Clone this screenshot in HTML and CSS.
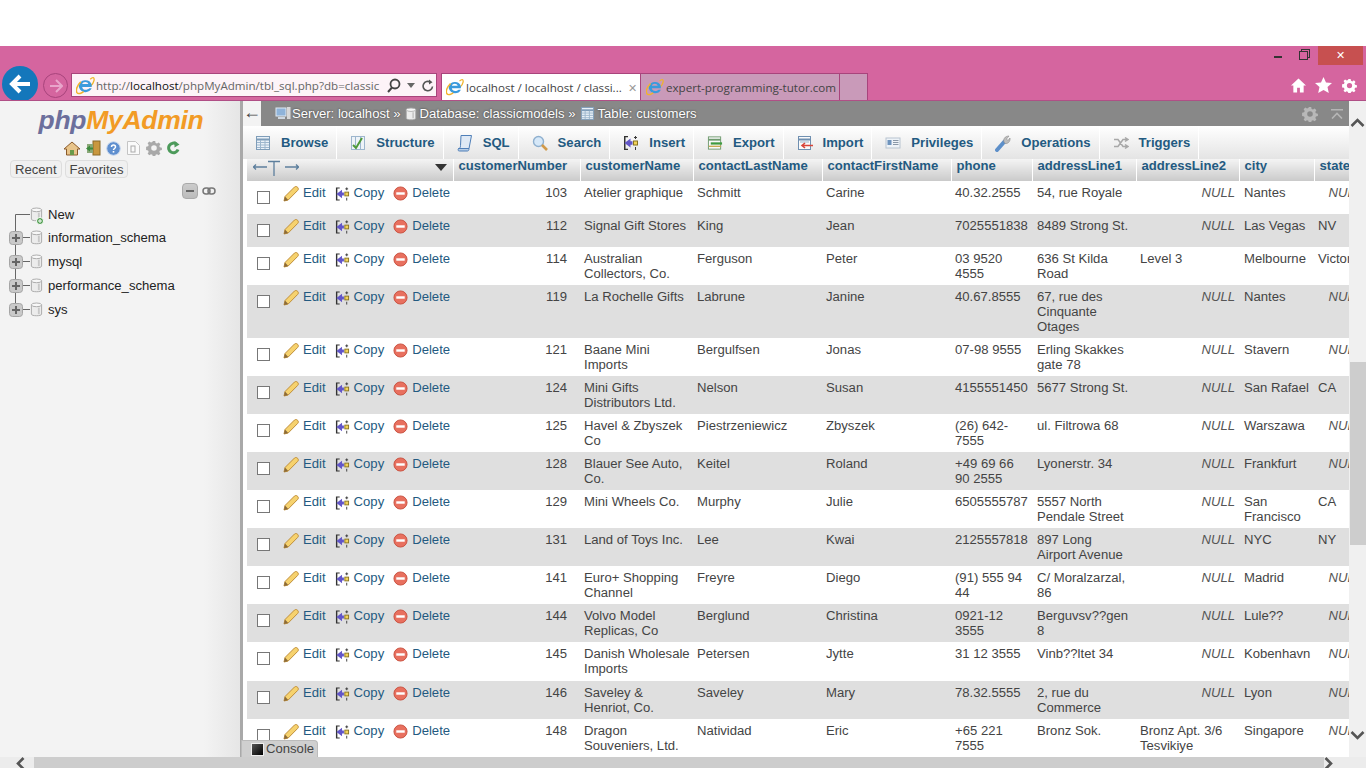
FILE: index.html
```html
<!DOCTYPE html>
<html lang="en">
<head>
<meta charset="utf-8">
<title>localhost / localhost / classicmodels / customers</title>
<link rel="stylesheet" href="styles.css">
</head>
<body>
<svg class="defs" width="0" height="0" aria-hidden="true">
  <symbol id="ie" viewBox="0 0 20 20">
    <path d="M15 3.500C17.500 1 19.500 1 19 4.500c-.4 2.200-2 4.500-4 6.500" fill="none" stroke="#f0b429" stroke-width="1.400"/>
    <path d="M3 10.500a7 7 0 0 1 13.500-1.500v2.500H6.500c.4 3.500 5 4 7.500 1.500h2.500c-2 5-11 6.200-13.500-1.500zM6.500 8.500h6.500c-.4-3-6-3-6.500 0z" fill="#3b9bdc" fill-rule="evenodd"/>
    <path d="M5 6C1 10-.5 15 1 17.500c1.500 2 5 .5 7-1" fill="none" stroke="#f2b32c" stroke-width="1.600"/>
  </symbol>
  <symbol id="pencil" viewBox="0 0 16 16">
    <path d="M1 15l1-4.500L11.500 1c1-.8 2.500-.5 3.300.5.800 1 .7 2.200-.2 3L5.200 14z" fill="#f6d26e" stroke="#c08f3a"/>
    <path d="M1 15l1-4.500 3.200 3.500z" fill="#8a6a3a"/>
  </symbol>
  <symbol id="copy" viewBox="0 0 16 16">
    <path d="M1 1h4v1.200H2.500v11.600H5V15H1z" fill="#333"/>
    <path d="M1.500 8L7.500 3.500v2.800h2v3.400h-2v2.800z" fill="#6256c8"/>
    <rect x="10.500" y="6" width="4" height="4" fill="#f2d35a" stroke="#8a7420"/>
    <path d="M12.500 1v3M11 2.500h3M12.500 12v3" stroke="#3a3a3a"/>
  </symbol>
  <symbol id="del" viewBox="0 0 16 16">
    <circle cx="8" cy="8" r="7" fill="#e8705f" stroke="#c9503f"/>
    <rect x="3.500" y="6.700" width="9" height="2.600" fill="#fff"/>
  </symbol>
  <symbol id="table" viewBox="0 0 16 16">
    <rect x="1.500" y="1.500" width="13" height="13" fill="#eaf1f8" stroke="#7f9db9"/>
    <path d="M1.500 4.500h13" stroke="#7f9db9" stroke-width="2"/>
    <path d="M2 7.500h12M2 10h12M2 12.500h12M5.500 5v9M10 5v9" stroke="#9db6cd"/>
  </symbol>
  <symbol id="db" viewBox="0 0 14 16">
    <path d="M1.500 3v10c0 2.300 11 2.300 11 0V3z" fill="#ececec" stroke="#a8a8a8"/>
    <ellipse cx="7" cy="3" rx="5.500" ry="2" fill="#f8f8f8" stroke="#a8a8a8"/>
    <path d="M9.500 6v7" stroke="#c8c8c8" stroke-width="2"/>
  </symbol>
  <symbol id="gear" viewBox="0 0 16 16">
    <path fill-rule="evenodd" d="M6.800 1h2.400l.4 2 1.400.6 1.700-1.100 1.700 1.700-1.100 1.700.6 1.400 2 .4v2.400l-2 .4-.6 1.400 1.100 1.700-1.700 1.700-1.700-1.100-1.400.6-.4 2H6.800l-.4-2-1.400-.6-1.700 1.100-1.700-1.700 1.100-1.700-.6-1.400-2-.4V6.700l2-.4.6-1.400-1.100-1.700 1.700-1.700 1.700 1.100 1.400-.6zM8 5.200a2.800 2.800 0 1 0 0 5.600 2.800 2.800 0 0 0 0-5.600z" fill="currentColor"/>
  </symbol>
  <symbol id="plus" viewBox="0 0 14 14">
    <rect x=".5" y=".5" width="13" height="13" rx="3" fill="#c9c9c9" stroke="#a5a5a5"/>
    <path d="M3 7h8M7 3v8" stroke="#666" stroke-width="2"/>
  </symbol>
</svg>

<header class="chrome">
  <div class="winbar">
    <span class="win-min"></span>
    <span class="win-restore"></span>
    <span class="win-close">✕</span>
  </div>
  <div class="toolbar">
    <span class="back"><svg width="22" height="20" viewBox="0 0 22 20"><path d="M11 2L3 10l8 8M3 10h18" fill="none" stroke="#fff" stroke-width="4"/></svg></span>
    <span class="forward"><svg width="14" height="14" viewBox="0 0 14 14"><path d="M7 1l6 6-6 6M13 7H1" fill="none" stroke="#e9a5cb" stroke-width="2"/></svg></span>
    <div class="address">
      <svg class="ie-icon" width="19" height="19"><use href="#ie"/></svg>
      <span class="url">http://<b>localhost</b>/phpMyAdmin/tbl_sql.php?db=classic</span>
      <svg class="addr-ico" width="14" height="15" viewBox="0 0 14 15"><circle cx="8" cy="6" r="4.500" fill="none" stroke="#444" stroke-width="1.800"/><path d="M5 9.500L1 14" stroke="#444" stroke-width="2"/></svg>
      <svg class="addr-caret" width="8" height="5" viewBox="0 0 8 5"><path d="M0 0h8L4 5z" fill="#666"/></svg>
      <svg class="addr-ico2" width="12" height="13" viewBox="0 0 12 13"><path d="M10.500 7.500A4.700 4.700 0 1 1 8.500 3.200" fill="none" stroke="#555" stroke-width="1.600"/><path d="M7 .5l3.500 2.800L7 5.500z" fill="#555"/></svg>
    </div>
    <div class="tab-active">
      <svg width="18" height="18"><use href="#ie"/></svg>
      <span class="tab-title">localhost / localhost / classi...</span>
      <span class="tab-x">✕</span>
    </div>
    <div class="tab-idle">
      <svg width="18" height="18"><use href="#ie"/></svg>
      <span class="tab-title">expert-programming-tutor.com</span>
    </div>
    <div class="tab-new"></div>
    <div class="tools">
      <svg width="15" height="15" viewBox="0 0 16 15"><path d="M8 0L0 7.500h2.500V15h4v-5h3v5h4V7.500H16z" fill="#fff"/></svg>
      <svg width="17" height="16" viewBox="0 0 17 16"><path d="M8.500 0l2.500 5.500 6 .6-4.500 4 1.300 5.900-5.300-3-5.300 3L4.500 10.100 0 6.100l6-.6z" fill="#fff"/></svg>
      <svg class="tool-gear" width="15" height="15"><use href="#gear"/></svg>
    </div>
  </div>
</header>

<div class="workspace">
  <aside class="sidebar">
    <div class="logo"><span class="logo-php">php</span><span class="logo-my">MyAdmin</span></div>
    <div class="nav-icons">
      <svg width="16" height="15" viewBox="0 0 16 15"><path d="M8 1L0 8h2.500v6h11V8H16z" fill="#e8c48a" stroke="#8a5a2a"/><rect x="6" y="9" width="4" height="5" fill="#6a9a4a"/></svg>
      <svg width="16" height="16" viewBox="0 0 16 16"><rect x="8" y="1" width="7" height="14" fill="#c9973f" stroke="#8a6a2a"/><rect x="2" y="4" width="6" height="9" fill="#8aa878"/><path d="M1 8.500l4-3v2h3v2H5v2z" fill="#3d8a3d"/></svg>
      <svg width="15" height="15" viewBox="0 0 15 15"><circle cx="7.500" cy="7.500" r="6.800" fill="#5f8fcf" stroke="#c7d7ee"/><path d="M5.500 6c0-2.600 4-2.600 4 0 0 1.500-2 1.500-2 3" fill="none" stroke="#fff" stroke-width="1.500"/><rect x="6.700" y="10" width="1.600" height="1.600" fill="#fff"/></svg>
      <svg width="15" height="16" viewBox="0 0 15 16"><path d="M1.500 1.500h8l4 4v9h-12z" fill="#fafafa" stroke="#c4c4c4"/><rect x="5" y="6" width="4" height="6" fill="none" stroke="#aaa"/></svg>
      <svg class="nav-gear" width="16" height="16"><use href="#gear"/></svg>
      <svg width="13" height="14" viewBox="0 0 13 14"><path d="M11 8.500A4.800 4.800 0 1 1 9.500 3.200" fill="none" stroke="#4c9a5a" stroke-width="3"/><path d="M7.500 0l5 3.500-5 3z" fill="#4c9a5a"/></svg>
    </div>
    <div class="recent-row">
      <span class="pill">Recent</span>
      <span class="pill">Favorites</span>
    </div>
    <div class="collapse-row">
      <span class="collapse-btn"></span>
      <svg width="14" height="8" viewBox="0 0 14 8"><rect x="1" y="1" width="7" height="6" rx="3" fill="none" stroke="#777" stroke-width="1.500"/><rect x="6" y="1" width="7" height="6" rx="3" fill="none" stroke="#777" stroke-width="1.500"/></svg>
    </div>
    <ul class="tree">
      <li class="tree-row">
        <svg class="tree-svg" width="44" height="24" viewBox="0 0 44 24"><path d="M15.500 24V12.500H30" fill="none" stroke="#666"/><use href="#db" x="30" y="5" width="13" height="15"/><circle cx="40" cy="19" r="3.500" fill="#4a9a4a" stroke="#fff"/><path d="M38 19h4M40 17v4" stroke="#fff"/></svg>
        <span>New</span>
      </li>
      <li class="tree-row">
        <svg class="tree-svg" width="44" height="24" viewBox="0 0 44 24"><path d="M15.500 0v24M15.500 12.500H30" fill="none" stroke="#666"/><use href="#plus" x="9" y="6" width="14" height="14"/><use href="#db" x="30" y="5" width="13" height="15"/></svg>
        <span>information_schema</span>
      </li>
      <li class="tree-row">
        <svg class="tree-svg" width="44" height="24" viewBox="0 0 44 24"><path d="M15.500 0v24M15.500 12.500H30" fill="none" stroke="#666"/><use href="#plus" x="9" y="6" width="14" height="14"/><use href="#db" x="30" y="5" width="13" height="15"/></svg>
        <span>mysql</span>
      </li>
      <li class="tree-row">
        <svg class="tree-svg" width="44" height="24" viewBox="0 0 44 24"><path d="M15.500 0v24M15.500 12.500H30" fill="none" stroke="#666"/><use href="#plus" x="9" y="6" width="14" height="14"/><use href="#db" x="30" y="5" width="13" height="15"/></svg>
        <span>performance_schema</span>
      </li>
      <li class="tree-row">
        <svg class="tree-svg" width="44" height="24" viewBox="0 0 44 24"><path d="M15.500 0v12.500H30" fill="none" stroke="#666"/><use href="#plus" x="9" y="6" width="14" height="14"/><use href="#db" x="30" y="5" width="13" height="15"/></svg>
        <span>sys</span>
      </li>
    </ul>
  </aside>

  <main class="main">
    <div class="crumbs">
      <span class="crumb-back">←</span>
      <svg class="crumb-ico first-ico" width="16" height="15" viewBox="0 0 16 15"><rect x="1" y="2" width="10" height="8" fill="#8fb3d9" stroke="#dfe9f3"/><rect x="3" y="11" width="7" height="2" fill="#cfd8e2"/><rect x="12" y="1" width="3.500" height="12" fill="#d8d8d8"/></svg>
      <span class="crumb">Server: localhost »</span>
      <svg class="crumb-ico" width="12" height="14"><use href="#db"/></svg>
      <span class="crumb">Database: classicmodels »</span>
      <svg class="crumb-ico" width="15" height="15"><use href="#table"/></svg>
      <span class="crumb">Table: customers</span>
      <span class="crumb-right">
        <svg class="crumb-gear" width="16" height="16"><use href="#gear"/></svg>
        <svg width="12" height="10" viewBox="0 0 12 10"><path d="M0 .8h12M1 9.500L6 4.500l5 5" fill="none" stroke="#b5b5b5" stroke-width="1.600"/></svg>
      </span>
    </div>

    <nav class="tabs">
      <a class="tab"><svg width="16" height="16"><use href="#table"/></svg>Browse</a>
      <a class="tab"><svg width="16" height="16" viewBox="0 0 16 16"><rect x="1.500" y="1.500" width="13" height="13" fill="#eef3f8" stroke="#9db6cd"/><path d="M5.500 2v12M10.500 2v12" stroke="#9db6cd"/><path d="M3 10l3 3 6-10" fill="none" stroke="#4e9a3a" stroke-width="2"/></svg>Structure</a>
      <a class="tab"><svg width="16" height="18" viewBox="0 0 16 18"><path d="M4 1.500h10.500l-2.500 13H1.500c1.500 0 2-1 2-3z" fill="#dfe9f5" stroke="#4f7fb8"/><path d="M1.500 14.500c-1 2 0 2.500 1 2.500h8c1 0 1.500-1 1.500-2.500z" fill="#b7cde6" stroke="#4f7fb8"/></svg>SQL</a>
      <a class="tab"><svg width="16" height="16" viewBox="0 0 16 16"><circle cx="6.500" cy="6.500" r="5" fill="#d6e8f8" stroke="#8fb0cf" stroke-width="1.400"/><path d="M10 10l5 5" stroke="#d19a4a" stroke-width="2.600"/></svg>Search</a>
      <a class="tab"><svg width="16" height="16"><use href="#copy"/></svg>Insert</a>
      <a class="tab"><svg width="16" height="16" viewBox="0 0 17 16"><rect x="1.500" y="1.500" width="13" height="13" fill="#fafafa" stroke="#6f9a6f"/><path d="M1.500 4.500h13" stroke="#6f9a6f" stroke-width="2"/><path d="M4 8.500h12" stroke="#3f9a3f" stroke-width="2.400"/><path d="M2 11.500h13" stroke="#c8a64a" stroke-width="1.400"/></svg>Export</a>
      <a class="tab"><svg width="16" height="16" viewBox="0 0 16 16"><rect x="1.500" y="1.500" width="12" height="13" fill="#fafafa" stroke="#6f8fb0"/><path d="M1.500 4.500h12" stroke="#6f8fb0" stroke-width="2"/><path d="M3 7h9" stroke="#9db6cd"/><path d="M5 10.500h11M8 8l-3 2.500L8 13" fill="none" stroke="#d8453a" stroke-width="1.600"/></svg>Import</a>
      <a class="tab"><svg width="16" height="16" viewBox="0 0 16 16"><rect x="1" y="3" width="14" height="10" fill="#eef3f8" stroke="#b8c4d0"/><rect x="2.500" y="5" width="4" height="5" fill="#6f94bd"/><path d="M8 5.500h5.500M8 7.500h5.500M8 9.500h5.500" stroke="#8a98a8"/></svg>Privileges</a>
      <a class="tab"><svg width="16" height="18" viewBox="0 0 16 18"><path d="M2 16l7.500-8.500" stroke="#5d8fc9" stroke-width="4" stroke-linecap="round"/><path d="M9 8c-1-3 1-6 5-6l-2.500 3 1.500 1.500L15 4c.5 4-2.500 6-5 5.500z" fill="#bdbdbd" stroke="#8a8a8a" stroke-width=".6"/></svg>Operations</a>
      <a class="tab"><svg width="16" height="16" viewBox="0 0 16 16"><path d="M1 4.500h4l5 7h4M1 11.500h4l5-7h4M12 2.500l3 2-3 2M12 9.500l3 2-3 2" fill="none" stroke="#a8a8a8" stroke-width="1.500"/></svg>Triggers</a>
    </nav>

    <div class="results">
      <table class="grid">
        <colgroup>
          <col class="c-cb"><col class="c-act"><col class="c-num"><col class="c-name"><col class="c-last"><col class="c-first"><col class="c-phone"><col class="c-a1"><col class="c-a2"><col class="c-city"><col class="c-state">
        </colgroup>
        <thead>
          <tr>
            <th colspan="2" class="th-tools">
              <div class="th-inner">
                <svg width="46" height="20" viewBox="0 0 46 20"><path d="M0 8h14M3 5.500L.5 8 3 10.500M32 8h14M43 5.500L45.500 8 43 10.500M15 2.500h12M21 2.500V17" fill="none" stroke="#5d7f9d" stroke-width="1.300"/></svg>
                <svg class="sort-tri" width="12" height="7" viewBox="0 0 12 7"><path d="M0 0h12L6 7z" fill="#333"/></svg>
              </div>
            </th>
            <th>customerNumber</th><th>customerName</th><th>contactLastName</th><th>contactFirstName</th><th>phone</th><th>addressLine1</th><th>addressLine2</th><th>city</th><th>state</th>
          </tr>
        </thead>
        <tbody>
          <tr><td class="cb"><input type="checkbox" aria-label="Select row"></td><td><div class="acts"><a><svg width="16" height="16"><use href="#pencil"/></svg>Edit</a><a><svg width="15" height="16"><use href="#copy"/></svg>Copy</a><a><svg width="15" height="15"><use href="#del"/></svg>Delete</a></div></td><td class="num">103</td><td>Atelier graphique</td><td>Schmitt</td><td>Carine</td><td>40.32.2555</td><td>54, rue Royale</td><td class="null">NULL</td><td>Nantes</td><td class="null">NULL</td></tr>
          <tr><td class="cb"><input type="checkbox" aria-label="Select row"></td><td><div class="acts"><a><svg width="16" height="16"><use href="#pencil"/></svg>Edit</a><a><svg width="15" height="16"><use href="#copy"/></svg>Copy</a><a><svg width="15" height="15"><use href="#del"/></svg>Delete</a></div></td><td class="num">112</td><td>Signal Gift Stores</td><td>King</td><td>Jean</td><td>7025551838</td><td>8489 Strong St.</td><td class="null">NULL</td><td>Las Vegas</td><td>NV</td></tr>
          <tr><td class="cb"><input type="checkbox" aria-label="Select row"></td><td><div class="acts"><a><svg width="16" height="16"><use href="#pencil"/></svg>Edit</a><a><svg width="15" height="16"><use href="#copy"/></svg>Copy</a><a><svg width="15" height="15"><use href="#del"/></svg>Delete</a></div></td><td class="num">114</td><td>Australian Collectors, Co.</td><td>Ferguson</td><td>Peter</td><td>03 9520 4555</td><td>636 St Kilda Road</td><td>Level 3</td><td>Melbourne</td><td>Victoria</td></tr>
          <tr><td class="cb"><input type="checkbox" aria-label="Select row"></td><td><div class="acts"><a><svg width="16" height="16"><use href="#pencil"/></svg>Edit</a><a><svg width="15" height="16"><use href="#copy"/></svg>Copy</a><a><svg width="15" height="15"><use href="#del"/></svg>Delete</a></div></td><td class="num">119</td><td>La Rochelle Gifts</td><td>Labrune</td><td>Janine</td><td>40.67.8555</td><td>67, rue des Cinquante Otages</td><td class="null">NULL</td><td>Nantes</td><td class="null">NULL</td></tr>
          <tr><td class="cb"><input type="checkbox" aria-label="Select row"></td><td><div class="acts"><a><svg width="16" height="16"><use href="#pencil"/></svg>Edit</a><a><svg width="15" height="16"><use href="#copy"/></svg>Copy</a><a><svg width="15" height="15"><use href="#del"/></svg>Delete</a></div></td><td class="num">121</td><td>Baane Mini Imports</td><td>Bergulfsen</td><td>Jonas</td><td>07-98 9555</td><td>Erling Skakkes gate 78</td><td class="null">NULL</td><td>Stavern</td><td class="null">NULL</td></tr>
          <tr><td class="cb"><input type="checkbox" aria-label="Select row"></td><td><div class="acts"><a><svg width="16" height="16"><use href="#pencil"/></svg>Edit</a><a><svg width="15" height="16"><use href="#copy"/></svg>Copy</a><a><svg width="15" height="15"><use href="#del"/></svg>Delete</a></div></td><td class="num">124</td><td>Mini Gifts Distributors Ltd.</td><td>Nelson</td><td>Susan</td><td>4155551450</td><td>5677 Strong St.</td><td class="null">NULL</td><td>San Rafael</td><td>CA</td></tr>
          <tr><td class="cb"><input type="checkbox" aria-label="Select row"></td><td><div class="acts"><a><svg width="16" height="16"><use href="#pencil"/></svg>Edit</a><a><svg width="15" height="16"><use href="#copy"/></svg>Copy</a><a><svg width="15" height="15"><use href="#del"/></svg>Delete</a></div></td><td class="num">125</td><td>Havel &amp; Zbyszek Co</td><td>Piestrzeniewicz</td><td>Zbyszek</td><td>(26) 642-7555</td><td>ul. Filtrowa 68</td><td class="null">NULL</td><td>Warszawa</td><td class="null">NULL</td></tr>
          <tr><td class="cb"><input type="checkbox" aria-label="Select row"></td><td><div class="acts"><a><svg width="16" height="16"><use href="#pencil"/></svg>Edit</a><a><svg width="15" height="16"><use href="#copy"/></svg>Copy</a><a><svg width="15" height="15"><use href="#del"/></svg>Delete</a></div></td><td class="num">128</td><td>Blauer See Auto, Co.</td><td>Keitel</td><td>Roland</td><td>+49 69 66 90 2555</td><td>Lyonerstr. 34</td><td class="null">NULL</td><td>Frankfurt</td><td class="null">NULL</td></tr>
          <tr><td class="cb"><input type="checkbox" aria-label="Select row"></td><td><div class="acts"><a><svg width="16" height="16"><use href="#pencil"/></svg>Edit</a><a><svg width="15" height="16"><use href="#copy"/></svg>Copy</a><a><svg width="15" height="15"><use href="#del"/></svg>Delete</a></div></td><td class="num">129</td><td>Mini Wheels Co.</td><td>Murphy</td><td>Julie</td><td>6505555787</td><td>5557 North Pendale Street</td><td class="null">NULL</td><td>San Francisco</td><td>CA</td></tr>
          <tr><td class="cb"><input type="checkbox" aria-label="Select row"></td><td><div class="acts"><a><svg width="16" height="16"><use href="#pencil"/></svg>Edit</a><a><svg width="15" height="16"><use href="#copy"/></svg>Copy</a><a><svg width="15" height="15"><use href="#del"/></svg>Delete</a></div></td><td class="num">131</td><td>Land of Toys Inc.</td><td>Lee</td><td>Kwai</td><td>2125557818</td><td>897 Long Airport Avenue</td><td class="null">NULL</td><td>NYC</td><td>NY</td></tr>
          <tr><td class="cb"><input type="checkbox" aria-label="Select row"></td><td><div class="acts"><a><svg width="16" height="16"><use href="#pencil"/></svg>Edit</a><a><svg width="15" height="16"><use href="#copy"/></svg>Copy</a><a><svg width="15" height="15"><use href="#del"/></svg>Delete</a></div></td><td class="num">141</td><td>Euro+ Shopping Channel</td><td>Freyre</td><td>Diego</td><td>(91) 555 94 44</td><td>C/ Moralzarzal, 86</td><td class="null">NULL</td><td>Madrid</td><td class="null">NULL</td></tr>
          <tr><td class="cb"><input type="checkbox" aria-label="Select row"></td><td><div class="acts"><a><svg width="16" height="16"><use href="#pencil"/></svg>Edit</a><a><svg width="15" height="16"><use href="#copy"/></svg>Copy</a><a><svg width="15" height="15"><use href="#del"/></svg>Delete</a></div></td><td class="num">144</td><td>Volvo Model Replicas, Co</td><td>Berglund</td><td>Christina</td><td>0921-12 3555</td><td>Berguvsv??gen 8</td><td class="null">NULL</td><td>Lule??</td><td class="null">NULL</td></tr>
          <tr class="row-39"><td class="cb"><input type="checkbox" aria-label="Select row"></td><td><div class="acts"><a><svg width="16" height="16"><use href="#pencil"/></svg>Edit</a><a><svg width="15" height="16"><use href="#copy"/></svg>Copy</a><a><svg width="15" height="15"><use href="#del"/></svg>Delete</a></div></td><td class="num">145</td><td>Danish Wholesale Imports</td><td>Petersen</td><td>Jytte</td><td>31 12 3555</td><td>Vinb??ltet 34</td><td class="null">NULL</td><td>Kobenhavn</td><td class="null">NULL</td></tr>
          <tr><td class="cb"><input type="checkbox" aria-label="Select row"></td><td><div class="acts"><a><svg width="16" height="16"><use href="#pencil"/></svg>Edit</a><a><svg width="15" height="16"><use href="#copy"/></svg>Copy</a><a><svg width="15" height="15"><use href="#del"/></svg>Delete</a></div></td><td class="num">146</td><td>Saveley &amp; Henriot, Co.</td><td>Saveley</td><td>Mary</td><td>78.32.5555</td><td>2, rue du Commerce</td><td class="null">NULL</td><td>Lyon</td><td class="null">NULL</td></tr>
          <tr><td class="cb"><input type="checkbox" aria-label="Select row"></td><td><div class="acts"><a><svg width="16" height="16"><use href="#pencil"/></svg>Edit</a><a><svg width="15" height="16"><use href="#copy"/></svg>Copy</a><a><svg width="15" height="15"><use href="#del"/></svg>Delete</a></div></td><td class="num">148</td><td>Dragon Souveniers, Ltd.</td><td>Natividad</td><td>Eric</td><td>+65 221 7555</td><td>Bronz Sok.</td><td>Bronz Apt. 3/6 Tesvikiye</td><td>Singapore</td><td class="null">NULL</td></tr>
        </tbody>
      </table>
    </div>
    <div class="console"><span class="console-ico"></span>Console</div>
  </main>

  <div class="vscroll">
    <svg class="v-up" width="15" height="9" viewBox="0 0 15 9"><path d="M1.500 8L7.500 2l6 6" fill="none" stroke="#555" stroke-width="2.600"/></svg>
    <div class="v-thumb"></div>
    <svg class="v-down" width="15" height="9" viewBox="0 0 15 9"><path d="M1.500 1l6 6 6-6" fill="none" stroke="#555" stroke-width="2.600"/></svg>
  </div>
</div>

<div class="hscroll">
  <svg class="h-left" width="9" height="11" viewBox="0 0 9 11"><path d="M7.500 1L2 6.500l5.500 5.500" fill="none" stroke="#555" stroke-width="2.600"/></svg>
  <div class="h-thumb"></div>
  <svg class="h-right" width="9" height="11" viewBox="0 0 9 11"><path d="M1.500 1L7 6.500 1.500 12" fill="none" stroke="#555" stroke-width="2.600"/></svg>
</div>
</body>
</html>
```

FILE: styles.css
```css
* { box-sizing: border-box; }
html, body { margin: 0; height: 768px; overflow: hidden; }
body {
  display: flex;
  flex-direction: column;
  padding-top: 46px;
  background: #fff;
  font-family: "Liberation Sans", Arial, sans-serif;
  font-size: 13.12px;
  line-height: 15px;
  color: #444;
}
.defs { position: absolute; }
svg { display: block; flex: none; }

/* browser chrome */
.chrome { height: 55px; flex: none; background: #d5659f; border-bottom: 1px solid #b04f86; overflow: hidden; }
.winbar { height: 19px; display: flex; justify-content: flex-end; align-items: flex-start; padding-right: 3px; }
.win-min { width: 8px; height: 2px; background: #333; margin-top: 10px; margin-right: 17px; }
.win-restore { width: 9px; height: 9px; border: 1px solid #333; margin-top: 5px; margin-right: 10px; box-shadow: 2px -2px 0 -1px #d5659f, 2px -2px 0 0 #333; }
.win-close { width: 45px; height: 19px; background: #c75050; color: #fff; text-align: center; font-size: 11px; line-height: 19px; }
.toolbar { height: 35px; display: flex; align-items: flex-start; padding: 8px 0 0 2px; }
.back { width: 36px; height: 36px; margin-top: -7px; border-radius: 50%; background: #1477bb; display: flex; align-items: center; justify-content: center; flex: none; }
.forward { width: 25px; height: 25px; margin: 0 3px 0 5px; border-radius: 50%; border: 1px solid #a8447c; display: flex; align-items: center; justify-content: center; flex: none; }
.address { width: 366px; height: 24px; background: #fdf3f8; border: 1px solid #a8447c; display: flex; align-items: center; padding-left: 4px; font-family: "Open Sans", sans-serif; font-size: 11.600px; color: #666; flex: none; }
.url { width: 285px; white-space: nowrap; overflow: hidden; }
.url b { font-weight: 400; color: #111; }
.ie-icon { margin-right: 1px; }
.addr-ico { margin-left: 6px; }
.addr-caret { margin-left: 6px; }
.addr-ico2 { margin-left: 7px; }
.tab-active, .tab-idle { width: 200px; height: 27px; display: flex; align-items: center; font-family: "Open Sans", sans-serif; font-size: 11.600px; color: #444; border: 1px solid #a8447c; border-bottom: 0; padding-left: 4px; flex: none; white-space: nowrap; }
.tab-active { background: #fff; margin-left: 4px; }
.tab-idle { background: #c99ab9; margin-left: -1px; padding-left: 5px; }
.tab-title { margin-left: 2px; }
.tab-x { margin-left: 6px; color: #999; font-size: 11px; }
.tab-new { width: 29px; height: 27px; background: #c99ab9; border: 1px solid #a8447c; border-bottom: 0; margin-left: -1px; flex: none; }
.tools { margin-left: auto; display: flex; align-items: center; gap: 9px; padding: 4px 9px 0 0; }
.tool-gear { color: #fff; margin-left: 1px; }

/* layout */
.workspace { flex: none; height: 656px; display: flex; }
.sidebar { width: 240px; flex: none; background: linear-gradient(90deg, #f3f3f3 0, #f3f3f3 85%, #e6e6e6 100%); color: #222; overflow: hidden; }
.logo { height: 35px; padding-top: 3px; text-align: center; padding-left: 2px; font-size: 26.500px; line-height: 32px; font-weight: 700; font-style: italic; letter-spacing: -.3px; white-space: nowrap; }
.logo-php { color: #6c6f9c; }
.logo-my { color: #f29b25; }
.nav-icons { height: 24px; display: flex; align-items: center; padding-left: 64px; gap: 5px; }
.nav-gear { color: #a9a9a9; }
.recent-row { display: flex; gap: 3px; padding-left: 10px; height: 18px; }
.pill { height: 18px; padding: 1px 4px; border: 1px solid #ddd; border-radius: 4px; background: #f0f0f0; color: #444; }
.collapse-row { display: flex; align-items: center; gap: 4px; padding: 5px 0 0 182px; height: 21px; }
.collapse-btn { width: 16px; height: 16px; border: 1px solid #aaa; border-radius: 4px; background: linear-gradient(#ccc, #bbb); position: relative; display: flex; align-items: center; justify-content: center; }
.collapse-btn::after { content: ""; width: 8px; height: 2px; background: #666; }
.tree { list-style: none; margin: 0; padding: 4px 0 0; }
.tree-row { height: 24px; display: flex; align-items: center; gap: 4px; color: #222; }
.tree-row:first-child { height: 22px; }

/* main */
.main { flex: 1; min-width: 0; position: relative; border-left: 3px solid #a9a9a9; display: flex; flex-direction: column; background: #fff; }
.crumbs { height: 25px; flex: none; background: #888; display: flex; align-items: center; color: #fff; text-shadow: 0 0 2px #333; }
.crumb-back { width: 18px; height: 25px; background: #f3f3f3; color: #444; text-align: center; line-height: 23px; font-size: 18px; text-shadow: none; margin-right: 14px; }
.crumb-ico { margin-right: 3px; color: #ccc; }
.first-ico { margin-right: 1px; }
.crumb { margin-right: 4px; white-space: nowrap; }
.crumb:nth-of-type(5) { margin-right: 3px; }
.crumb-right { margin-left: auto; display: flex; align-items: center; gap: 13px; padding-right: 6px; }
.crumb-gear { color: #b8b8b8; }
.tabs { height: 33px; flex: none; display: flex; background: linear-gradient(#fff, #e4e4e4); font-weight: 700; color: #235a81; }
.tab { display: flex; align-items: center; gap: 10px; padding: 0 8px 0 13px; border-right: 1px solid #fff; white-space: nowrap; }
.tab:first-child { margin-left: -1px; }
.results { flex: 1; min-height: 0; overflow: hidden; padding-left: 4px; }
.grid { table-layout: fixed; width: 1119px; border-collapse: collapse; }
.c-cb { width: 30px; }
.c-act { width: 176px; }
.c-num { width: 127px; }
.c-name { width: 113px; }
.c-last { width: 129px; }
.c-first { width: 129px; }
.c-phone { width: 81px; }
.c-a1 { width: 104px; }
.c-a2 { width: 103px; }
.c-city { width: 75px; }
.c-state { width: 52px; }
th { height: 22px; padding: 0 0 0 5px; line-height: 14px; vertical-align: top; text-align: left; white-space: nowrap; color: #235a81; background: linear-gradient(#f4f4f4, #cacaca); border-right: 1px solid #fff; }
th:last-child { border-right: 0; }
.th-tools { padding: 0 6px; }
.th-inner { display: flex; justify-content: space-between; align-items: flex-start; height: 22px; }
.sort-tri { margin-top: 5px; }
td { height: 33px; padding: 4px 2px 4px 4px; vertical-align: top; color: #444; }
td:nth-child(8) { padding: 4px 5px 4px 5px; }
td:nth-child(10) { padding-left: 5px; }
tbody tr:nth-child(even) td { background: #dfdfdf; }
.row-39 td { height: 39px; }
.cb { padding: 10px 0 0 10px; }
.cb input { appearance: none; -webkit-appearance: none; display: block; width: 13px; height: 13px; margin: 0; background: #fff; border: 1px solid #777; }
.acts { display: flex; padding-left: 2px; gap: 9px; color: #235a81; white-space: nowrap; }
.acts a { display: flex; align-items: flex-start; gap: 4px; }
.acts svg { margin-top: 1px; }
.num { text-align: right; padding-right: 13px; }
.null { text-align: right; padding-right: 4px; font-style: italic; color: #555; white-space: nowrap; }
.console { position: absolute; left: -2px; bottom: 0; width: 77px; height: 17px; background: #cfcfcf; border: 1px solid #bbb; border-bottom: 0; border-radius: 0 4px 0 0; display: flex; align-items: center; padding: 0 0 2px 9px; color: #444; gap: 2px; }
.console-ico { width: 13px; height: 13px; background: linear-gradient(135deg, #555, #000); border: 1px solid #eee; flex: none; margin-top: 2px; }

/* scrollbars */
.vscroll { width: 17px; flex: none; background: #f0f0f0; display: flex; flex-direction: column; align-items: flex-end; }
.v-up { margin: 17px 1px 0 0; }
.v-thumb { width: 16px; height: 183px; background: #cdcdcd; margin-top: 235px; }
.v-down { margin: 186px 1px 0 0; }
.hscroll { flex: none; height: 11px; background: #ececec; display: flex; align-items: center; overflow: hidden; }
.h-left { margin-left: 16px; }
.h-thumb { width: 1290px; height: 11px; margin-left: 9px; background: #cdcdcd; }
.h-right { margin-left: 0; }
```
